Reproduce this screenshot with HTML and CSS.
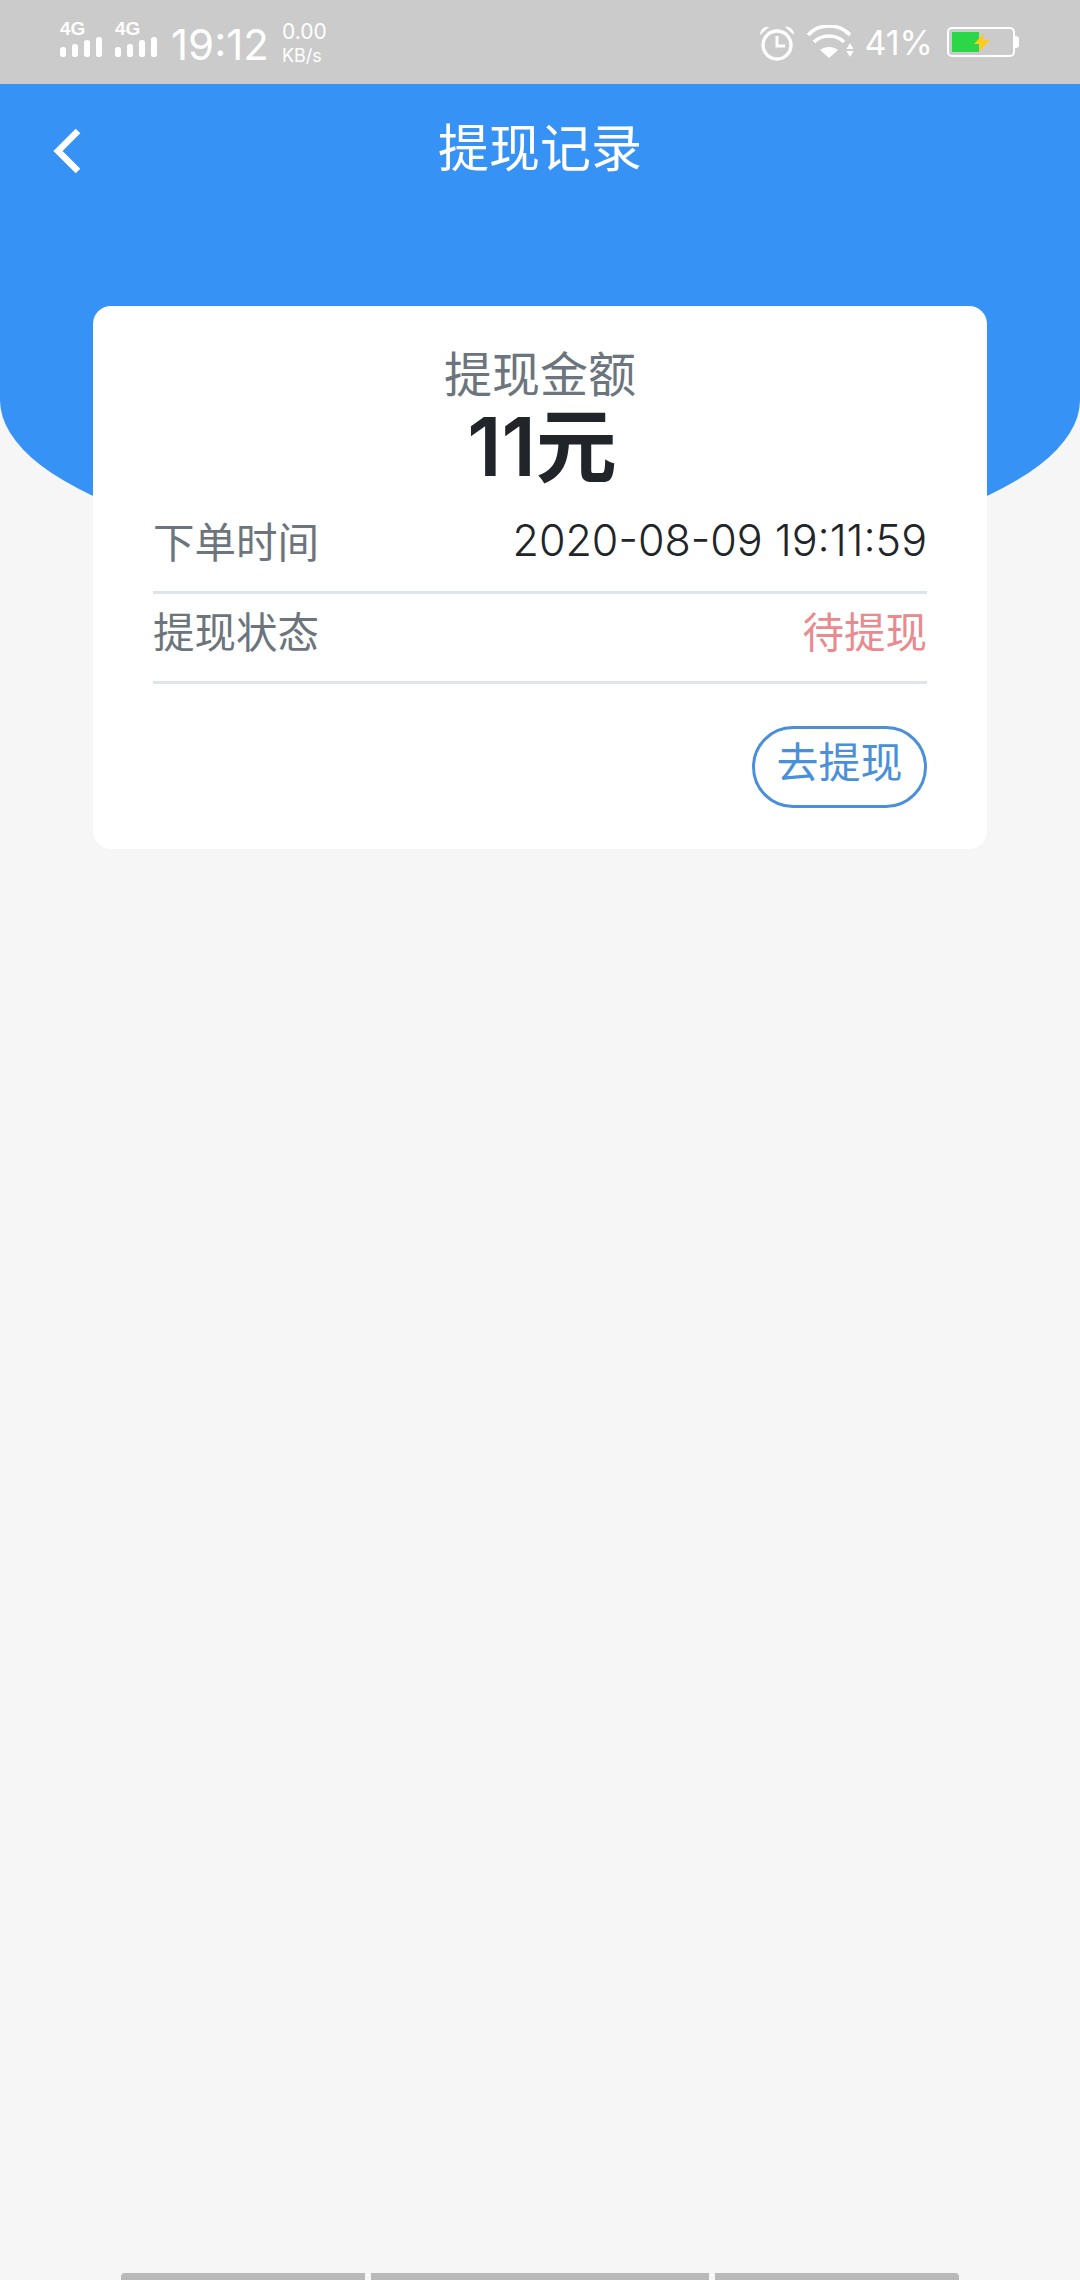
FILE: index.html
```html
<!DOCTYPE html>
<html lang="zh-CN">
<head>
    <meta charset="UTF-8">
    <meta name="viewport" content="width=device-width, initial-scale=1.0">
    <title>提现记录</title>
    <link rel="stylesheet" href="styles.css">
</head>

<body>
    <div class="page">
        <!-- Status bar -->
        <div class="status-bar">
            <div class="signal">
                <span class="signal-label">4G</span>
                <svg class="signal-bars" width="43" height="20" viewBox="0 0 43 20">
                    <rect x="0" y="10" width="6" height="10" rx="2.5"/>
                    <rect x="12" y="7" width="6" height="13" rx="2.5"/>
                    <rect x="24" y="3" width="6" height="17" rx="2.5"/>
                    <rect x="36" y="0" width="6" height="20" rx="2.5"/>
                </svg>
            </div>
            <div class="signal signal-second">
                <span class="signal-label">4G</span>
                <svg class="signal-bars" width="43" height="20" viewBox="0 0 43 20">
                    <rect x="0" y="10" width="6" height="10" rx="2.5"/>
                    <rect x="12" y="7" width="6" height="13" rx="2.5"/>
                    <rect x="24" y="3" width="6" height="17" rx="2.5"/>
                    <rect x="36" y="0" width="6" height="20" rx="2.5"/>
                </svg>
            </div>
            <span class="clock">19:12</span>
            <div class="speed">
                <span class="speed-value">0.00</span>
                <span class="speed-unit">KB/s</span>
            </div>

            <div class="status-right">
                <svg class="icon-alarm" width="36" height="36" viewBox="0 0 36 36">
                    <circle cx="18" cy="20" r="14" fill="none" stroke="#fff" stroke-width="3.4"/>
                    <path d="M18 11v10h8" fill="none" stroke="#fff" stroke-width="3"/>
                    <path d="M1 10 C1 4 6 1 10 2 Z M35 10 C35 4 30 1 26 2 Z" fill="#fff"/>
                </svg>
                <svg class="icon-wifi" width="47" height="34" viewBox="0 0 47 34">
                    <path d="M1 10 C12 -2 32 -2 43 10" fill="none" stroke="#fff" stroke-width="3.6"/>
                    <path d="M7 17 C15 9 29 9 37 17" fill="none" stroke="#fff" stroke-width="3.6"/>
                    <path d="M13 25 C18 21 26 21 31 25 L22 33 Z" fill="#fff"/>
                    <path d="M43 18 L46.5 24 H39.5 Z M39.5 26 H46.5 L43 32 Z" fill="#fff"/>
                </svg>
                <span class="battery-percent">41%</span>
                <div class="battery">
                    <div class="battery-fill"></div>
                    <svg class="battery-bolt" width="16" height="19" viewBox="0 0 16 19">
                        <path d="M10 0 L0 11 H6 L5 19 L16 7 H9 Z" fill="#fdcb1c"/>
                    </svg>
                </div>
                <div class="battery-nub"></div>
            </div>
        </div>

        <!-- Blue header -->
        <div class="header">
            <div class="nav">
                <svg class="back" width="30" height="46" viewBox="0 0 30 46">
                    <path d="M26 3 L6 23 L26 43" fill="none" stroke="#fff" stroke-width="6.5"/>
                </svg>
                <h1 class="title">提现记录</h1>
            </div>
        </div>

        <!-- Record card -->
        <div class="card">
            <div class="amount-label">提现金额</div>
            <div class="amount">11元</div>
            <div class="row row-time">
                <span class="row-label">下单时间</span>
                <span class="row-date">2020-08-09 19:11:59</span>
            </div>
            <div class="row row-state">
                <span class="row-label">提现状态</span>
                <span class="row-pending">待提现</span>
            </div>
            <div class="actions">
                <button class="withdraw-btn">去提现</button>
            </div>
        </div>

        <div class="nav-bar">
            <div class="nav-seg nav-seg-left"></div>
            <div class="nav-seg nav-seg-mid"></div>
            <div class="nav-seg nav-seg-right"></div>
        </div>
    </div>
</body>
</html>
```

FILE: styles.css
```css
/* Common styles */
* {
    box-sizing: border-box;
}

body {
    margin: 0;
    background-color: #f6f6f7;
    font-family: Inter, "Noto Sans CJK SC", sans-serif;
}

.page {
    display: flex;
    flex-direction: column;
    height: 2280px;
    overflow: hidden;
}

/* Status bar */
.status-bar {
    display: flex;
    align-items: flex-start;
    height: 84px;
    padding-left: 60px;
    background-color: #cbcbcb;
    color: #fff;
    flex-shrink: 0;
}

.signal {
    display: flex;
    flex-direction: column;
    width: 55px;
    padding-top: 21px;
}

.signal-label {
    height: 16px;
    font-family: "Liberation Sans", sans-serif;
    font-size: 19px;
    font-weight: bold;
    line-height: 16px;
}

.signal-bars {
    display: block;
}

.signal-bars rect {
    fill: #fff;
}

.clock {
    margin-left: 1px;
    padding-top: 22px;
    font-size: 42px;
    font-weight: 400;
    line-height: 46px;
}

.speed {
    display: flex;
    flex-direction: column;
    margin-left: 13px;
    padding-top: 20px;
}

.speed-value {
    font-size: 21px;
    font-weight: 400;
    line-height: 24px;
}

.speed-unit {
    font-size: 18px;
    font-weight: 400;
    line-height: 24px;
}

.status-right {
    display: flex;
    align-items: flex-start;
    margin-left: auto;
    padding-top: 25px;
    padding-right: 61px;
}

.icon-alarm {
    display: block;
}

.icon-wifi {
    display: block;
    margin-left: 12px;
}

.battery-percent {
    margin-left: 10px;
    font-size: 34px;
    font-weight: 400;
    line-height: 36px;
}

.battery {
    position: relative;
    width: 68px;
    height: 30px;
    margin-left: 14px;
    margin-top: 2px;
    padding: 3px;
    border: 2px solid #fff;
    border-radius: 5px;
}

.battery-fill {
    width: 27px;
    height: 20px;
    background-color: #2bd647;
}

.battery-bolt {
    position: absolute;
    top: 4px;
    left: 25px;
}

.battery-nub {
    width: 4px;
    height: 12px;
    margin-top: 11px;
    background-color: #fff;
    border-radius: 0 3px 3px 0;
}

/* Blue header */
.header {
    height: 487px;
    margin-bottom: -265px;
    background-color: #3692f5;
    border-radius: 0 0 540px 540px / 0 0 171px 171px;
    flex-shrink: 0;
}

.nav {
    position: relative;
    display: flex;
    justify-content: center;
    align-items: center;
    height: 130px;
}

.back {
    position: absolute;
    top: 44px;
    left: 52px;
}

.title {
    margin: 0;
    color: #fff;
    font-size: 51px;
    font-weight: 400;
    line-height: 1.2;
}

/* Record card */
.card {
    position: relative;
    display: flex;
    flex-direction: column;
    width: 894px;
    height: 543px;
    margin-left: 93px;
    padding: 40px 60px 0;
    background-color: #fff;
    border-radius: 18px;
    flex-shrink: 0;
}

.amount-label {
    color: #6c757d;
    font-size: 48px;
    line-height: 58px;
    text-align: center;
}

.amount {
    margin-bottom: 14px;
    padding-left: 4px;
    color: #212529;
    font-size: 81px;
    font-weight: 600;
    line-height: 86px;
    text-align: center;
}

.row {
    display: flex;
    justify-content: space-between;
    align-items: center;
    height: 90px;
    padding-bottom: 16px;
    border-bottom: 3px solid #dee4e7;
    font-size: 41.5px;
}

.row-label {
    color: #6c757d;
}

.row-date {
    color: #212529;
    font-size: 43px;
    font-weight: 300;
}

.row-pending {
    color: #e98a8f;
}

.actions {
    display: flex;
    justify-content: flex-end;
    margin-top: 42px;
}

.withdraw-btn {
    width: 175px;
    height: 82px;
    padding: 0 0 20px;
    background-color: #fff;
    border: 3px solid #4a90d9;
    border-radius: 41px;
    color: #4a90d9;
    font-family: inherit;
    font-size: 42px;
}

/* Bottom navigation strip */
.nav-bar {
    display: flex;
    gap: 6px;
    height: 7px;
    margin-top: auto;
    padding-left: 121px;
}

.nav-seg {
    background-color: #b9b9b9;
}

.nav-seg-left {
    width: 244px;
    border-radius: 4px 0 0 0;
}

.nav-seg-mid {
    width: 338px;
}

.nav-seg-right {
    width: 244px;
    border-radius: 0 4px 0 0;
}
```
